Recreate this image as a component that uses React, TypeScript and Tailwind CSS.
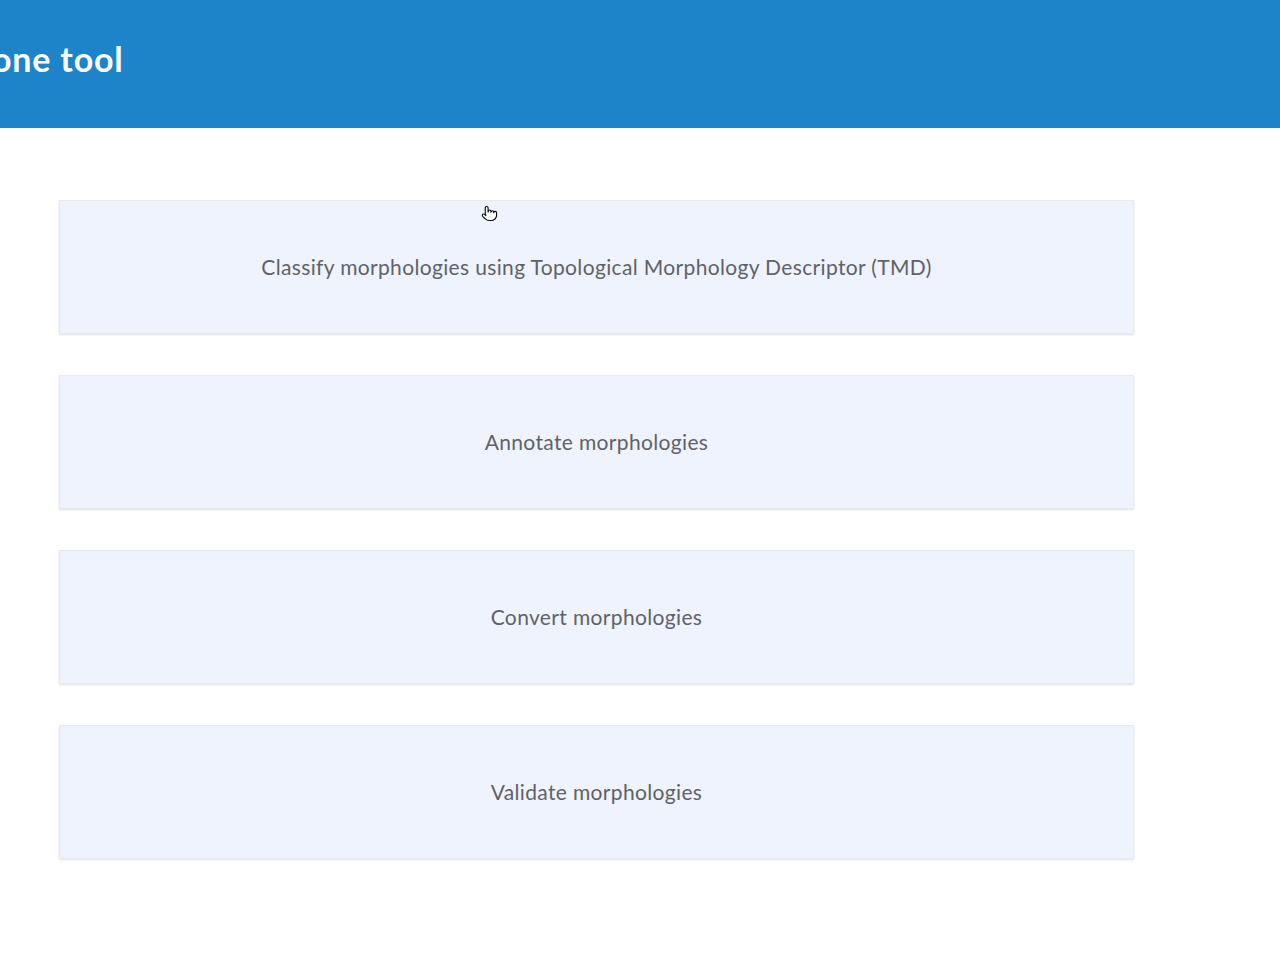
import { Pointer } from "lucide-react";

const tools = [
  "Classify morphologies using Topological Morphology Descriptor (TMD)",
  "Annotate morphologies",
  "Convert morphologies",
  "Validate morphologies",
];

export default function App() {
  return (
    <div
      className="relative min-h-[962px] w-[1280px] overflow-hidden bg-white"
      style={{ fontFamily: "Lato, 'Open Sans', sans-serif" }}
    >
      <header className="flex h-[128px] items-center bg-[#1e84c9] pb-[12px]">
        <h1 className="-ml-[8px] text-[34px] font-bold tracking-[0.8px] text-white">one tool</h1>
      </header>

      <main className="flex flex-col gap-[41px] pl-[59px] pt-[72px]">
        {tools.map((t) => (
          <a
            key={t}
            href="#"
            className="flex h-[134px] w-[1075px] items-center justify-center border border-[#e6e9f0] bg-[#eff3fd] text-[21px] tracking-[0.35px] text-[#5f6268] shadow-[0_1px_2px_rgba(0,0,0,0.12)]"
          >
            {t}
          </a>
        ))}
      </main>

      <Pointer className="absolute left-[481px] top-[205px] h-[17px] w-[17px] text-black" strokeWidth={1.5} fill="white" />
    </div>
  );
}
